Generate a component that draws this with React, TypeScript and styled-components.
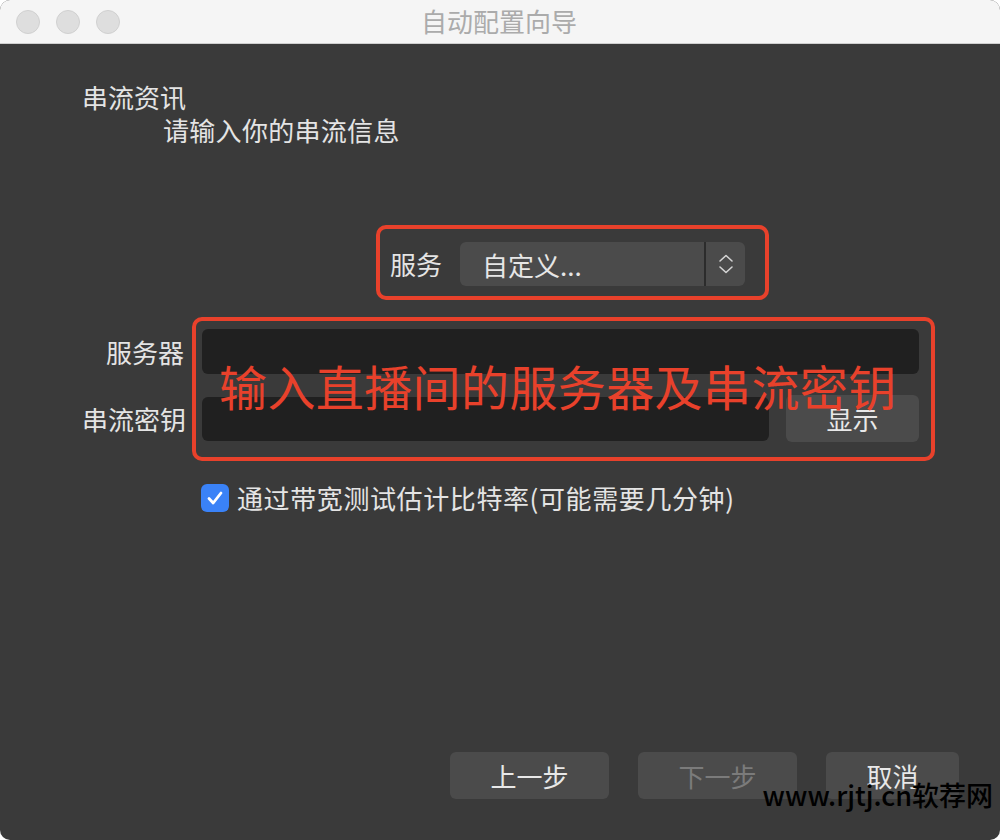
import React from "react";
import styled, { createGlobalStyle } from "styled-components";

const GlobalStyle = createGlobalStyle`
  html, body {
    margin: 0;
    padding: 0;
    background: #ffffff;
  }
  * {
    box-sizing: border-box;
  }
`;

const FONT = `"Noto Sans CJK SC", "Noto Sans", sans-serif`;
const RED = "#e8412b";

const Window = styled.div`
  position: relative;
  width: 1000px;
  height: 840px;
  border-radius: 10px;
  overflow: hidden;
  background: #3a3a3a;
  display: flex;
  flex-direction: column;
  font-family: ${FONT};
`;

const TitleBar = styled.div`
  height: 44px;
  flex-shrink: 0;
  background: #f5f5f5;
  border-bottom: 1px solid #cfcfcf;
  display: grid;
  grid-template-columns: 1fr auto 1fr;
  align-items: center;
`;

const Lights = styled.div`
  display: flex;
  gap: 16px;
  padding-left: 16px;
`;

const Light = styled.span`
  width: 24px;
  height: 24px;
  border-radius: 50%;
  background: #dedede;
  border: 1px solid #d0d0d0;
`;

const Title = styled.div`
  font-size: 26px;
  line-height: 32px;
  color: #ababab;
  margin-top: -1px;
  margin-left: -2px;
`;

const Content = styled.div`
  display: flex;
  flex-direction: column;
  padding: 0 81px 0 82px;
`;

const Heading = styled.div`
  margin-top: 37px;
  font-size: 26px;
  line-height: 32px;
  color: #e4e4e4;
`;

const SubHeading = styled.div`
  margin-top: 1px;
  margin-left: 81px;
  font-size: 26px;
  line-height: 32px;
  letter-spacing: 0.3px;
  color: #e4e4e4;
`;

const MarkBox = styled.div`
  align-self: flex-start;
  margin-top: 79px;
  margin-left: 294px;
  border: 4px solid ${RED};
  border-radius: 10px;
  padding: 13px 20px 10px 10px;
  display: flex;
  align-items: center;
  gap: 18px;
`;

const Label = styled.div<{ align?: "left" | "right"; spacing?: number }>`
  font-size: 26px;
  line-height: 32px;
  color: #e4e4e4;
  text-align: ${(p) => p.align || "left"};
  letter-spacing: ${(p) => p.spacing || 0}px;
  white-space: nowrap;
`;

const Select = styled.div`
  width: 285px;
  height: 44px;
  border-radius: 6px;
  background: #4b4b4b;
  display: flex;
  align-items: stretch;
`;

const SelectValue = styled.div`
  flex: 1;
  display: flex;
  align-items: center;
  padding-left: 22px;
  font-size: 26px;
  color: #e6e6e6;
`;

const SelectDivider = styled.div`
  width: 2px;
  background: #2c2c2c;
`;

const SelectArrows = styled.div`
  width: 39px;
  display: flex;
  align-items: center;
  justify-content: center;
`;

const FormBlock = styled.div`
  position: relative;
  margin-top: 29px;
  display: flex;
  flex-direction: column;
  gap: 21px;
`;

const Row = styled.div`
  display: grid;
  grid-template-columns: 102px 1fr;
  column-gap: 18px;
  align-items: center;
`;

const FieldLine = styled.div`
  display: flex;
  align-items: center;
  gap: 17px;
`;

const Input = styled.div<{ h: number }>`
  flex: 1;
  height: ${(p) => p.h}px;
  border-radius: 6px;
  background: #202020;
`;

const Button = styled.div<{ w: number; disabled?: boolean }>`
  width: ${(p) => p.w}px;
  height: 47px;
  border-radius: 6px;
  background: #4b4b4b;
  display: flex;
  align-items: center;
  justify-content: center;
  font-size: 26px;
  color: ${(p) => (p.disabled ? "#7b7b7b" : "#e8e8e8")};
`;

const Annotation = styled.div`
  position: absolute;
  top: -12px;
  left: 110px;
  right: -16px;
  bottom: -19px;
  border: 4px solid ${RED};
  border-radius: 10px;
  pointer-events: none;
`;

const AnnotationText = styled.div`
  position: absolute;
  top: 32px;
  left: 137px;
  font-size: 48px;
  line-height: 48px;
  letter-spacing: 0.4px;
  color: ${RED};
  white-space: nowrap;
`;

const CheckRow = styled.div`
  margin-top: 40px;
  margin-left: 119px;
  display: flex;
  align-items: center;
  gap: 8px;
`;

const CheckBox = styled.div`
  width: 28px;
  height: 28px;
  border-radius: 6px;
  background: #3a82f7;
  display: flex;
  align-items: center;
  justify-content: center;
`;

const Footer = styled.div`
  margin-top: auto;
  display: flex;
  justify-content: flex-end;
  gap: 29px;
  padding: 0 41px 41px 0;
`;

const Watermark = styled.div`
  position: absolute;
  right: 7px;
  bottom: 29px;
  font-size: 27px;
  line-height: 32px;
  font-weight: 500;
  color: #000000;
  white-space: nowrap;
`;

const Chevrons = () => (
  <svg width="16" height="24" viewBox="0 0 16 24" fill="none">
    <path d="M2 9 L8 3.5 L14 9" stroke="#d4d4d4" strokeWidth="1.6" strokeLinecap="round" strokeLinejoin="round" />
    <path d="M2 15 L8 20.5 L14 15" stroke="#d4d4d4" strokeWidth="1.6" strokeLinecap="round" strokeLinejoin="round" />
  </svg>
);

const Check = () => (
  <svg width="20" height="20" viewBox="0 0 20 20" fill="none">
    <path d="M4 10.5 L8.2 15 L16 5" stroke="#ffffff" strokeWidth="2.8" strokeLinecap="round" strokeLinejoin="round" />
  </svg>
);

export default function App() {
  return (
    <>
      <GlobalStyle />
      <Window>
        <TitleBar>
          <Lights>
            <Light />
            <Light />
            <Light />
          </Lights>
          <Title>自动配置向导</Title>
          <div />
        </TitleBar>

        <Content>
          <Heading>串流资讯</Heading>
          <SubHeading>请输入你的串流信息</SubHeading>

          <MarkBox>
            <Label>服务</Label>
            <Select>
              <SelectValue>自定义...</SelectValue>
              <SelectDivider />
              <SelectArrows>
                <Chevrons />
              </SelectArrows>
            </Select>
          </MarkBox>

          <FormBlock>
            <Row>
              <Label align="right">服务器</Label>
              <FieldLine>
                <Input h={45} />
              </FieldLine>
            </Row>
            <Row>
              <Label align="right">串流密钥</Label>
              <FieldLine>
                <Input h={44} />
                <Button w={133}>显示</Button>
              </FieldLine>
            </Row>
            <Annotation />
            <AnnotationText>输入直播间的服务器及串流密钥</AnnotationText>
          </FormBlock>

          <CheckRow>
            <CheckBox>
              <Check />
            </CheckBox>
            <Label spacing={0.6}>通过带宽测试估计比特率(可能需要几分钟)</Label>
          </CheckRow>
        </Content>

        <Footer>
          <Button w={159}>上一步</Button>
          <Button w={159} disabled>
            下一步
          </Button>
          <Button w={133}>取消</Button>
        </Footer>

        <Watermark>www.rjtj.cn软荐网</Watermark>
      </Window>
    </>
  );
}
